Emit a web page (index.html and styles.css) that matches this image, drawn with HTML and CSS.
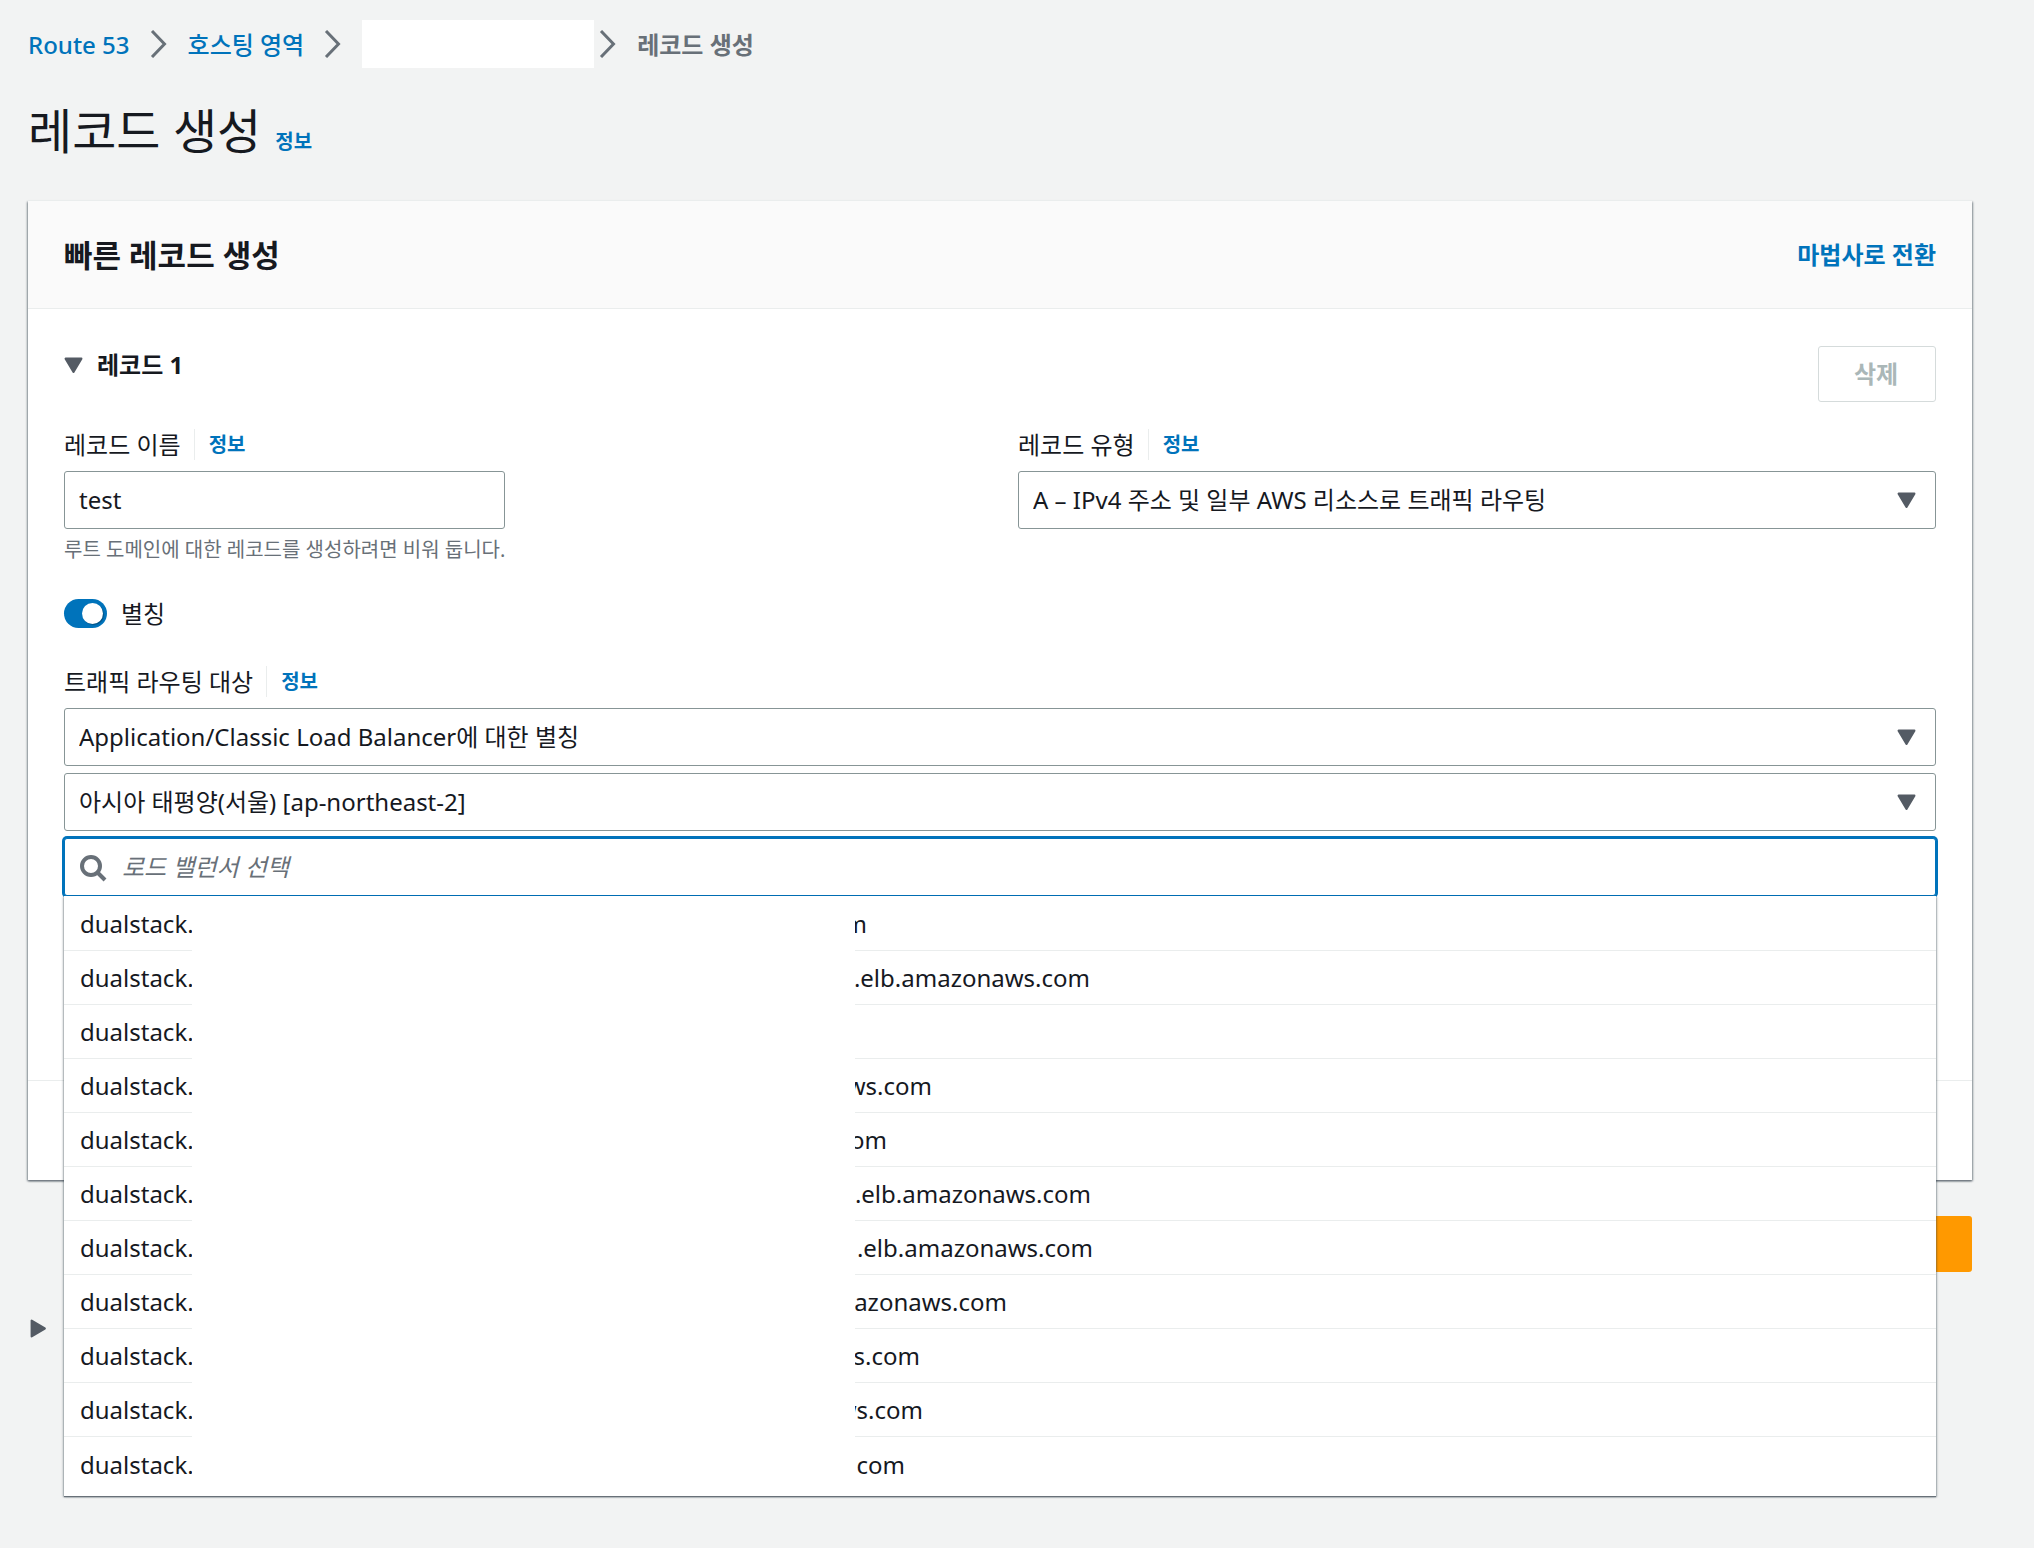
FILE: index.html
```html
<!DOCTYPE html>
<html lang="ko">

<head>
    <meta charset="utf-8">
    <title>레코드 생성</title>
    <link rel="stylesheet" href="styles.css">
</head>

<body>
    <div class="page">
        <nav class="breadcrumb">
            <a href="#">Route 53</a>
            <svg class="chevron" viewBox="0 0 18 28"><path d="M2 1 L14.500 14 L2 27"/></svg>
            <a href="#">호스팅 영역</a>
            <svg class="chevron" viewBox="0 0 18 28"><path d="M2 1 L14.500 14 L2 27"/></svg>
            <span class="zone"></span>
            <svg class="chevron last" viewBox="0 0 18 28"><path d="M2 1 L14.500 14 L2 27"/></svg>
            <span class="current">레코드 생성</span>
        </nav>

        <div class="title">
            <h1>레코드 생성</h1>
            <a class="info" href="#">정보</a>
        </div>

        <form class="card">
            <div class="cardHeader">
                <h2>빠른 레코드 생성</h2>
                <a href="#">마법사로 전환</a>
            </div>

            <div class="cardBody">
                <div class="recordHead">
                    <h3>
                        <svg class="arrow" viewBox="0 0 18 16"><path d="M1.500 1.500 H16.500 L9 14 Z"/></svg>
                        레코드 1
                    </h3>
                    <button class="remove" type="button" disabled>삭제</button>
                </div>

                <div class="columns">
                    <div>
                        <div class="labelRow">
                            <label for="name">레코드 이름</label>
                            <a class="info" href="#">정보</a>
                        </div>
                        <input class="control name" id="name" type="text" value="test">
                        <p class="hint">루트 도메인에 대한 레코드를 생성하려면 비워 둡니다.</p>
                    </div>
                    <div>
                        <div class="labelRow">
                            <label for="type">레코드 유형</label>
                            <a class="info" href="#">정보</a>
                        </div>
                        <div class="selectBox">
                            <select class="control" id="type">
                                <option>A – IPv4 주소 및 일부 AWS 리소스로 트래픽 라우팅</option>
                            </select>
                            <svg class="arrow" viewBox="0 0 18 16"><path d="M1.500 1.500 H16.500 L9 14 Z"/></svg>
                        </div>
                    </div>
                </div>

                <div class="alias">
                    <input class="toggle" id="alias" type="checkbox" checked>
                    <label for="alias">별칭</label>
                </div>

                <div class="labelRow">
                    <label for="target">트래픽 라우팅 대상</label>
                    <a class="info" href="#">정보</a>
                </div>
                <div class="targets">
                    <div class="selectBox">
                        <select class="control" id="target">
                            <option>Application/Classic Load Balancer에 대한 별칭</option>
                        </select>
                        <svg class="arrow" viewBox="0 0 18 16"><path d="M1.500 1.500 H16.500 L9 14 Z"/></svg>
                    </div>
                    <div class="selectBox">
                        <select class="control" aria-labelledby="target">
                            <option>아시아 태평양(서울) [ap-northeast-2]</option>
                        </select>
                        <svg class="arrow" viewBox="0 0 18 16"><path d="M1.500 1.500 H16.500 L9 14 Z"/></svg>
                    </div>
                    <div class="search">
                        <svg class="glass" viewBox="0 0 28 28"><circle cx="12" cy="12" r="9"/><path d="M18.500 18.500 L26 26"/></svg>
                        <input class="control" type="text" placeholder="로드 밸런서 선택" aria-label="로드 밸런서 선택">
                        <div class="dropdown">
                            <ul>
                                <li><span class="head">dualstack.</span><span class="tail" style="width: 12px">m</span></li>
                                <li><span class="head">dualstack.</span><span class="tail" style="width: 235px">.elb.amazonaws.com</span></li>
                                <li><span class="head">dualstack.</span></li>
                                <li><span class="head">dualstack.</span><span class="tail" style="width: 77px">ws.com</span></li>
                                <li><span class="head">dualstack.</span><span class="tail" style="width: 32px">om</span></li>
                                <li><span class="head">dualstack.</span><span class="tail" style="width: 236px">.elb.amazonaws.com</span></li>
                                <li><span class="head">dualstack.</span><span class="tail" style="width: 238px">.elb.amazonaws.com</span></li>
                                <li><span class="head">dualstack.</span><span class="tail" style="width: 152px">azonaws.com</span></li>
                                <li><span class="head">dualstack.</span><span class="tail" style="width: 65px">s.com</span></li>
                                <li><span class="head">dualstack.</span><span class="tail" style="width: 68px">ws.com</span></li>
                                <li><span class="head">dualstack.</span><span class="tail" style="width: 50px">com</span></li>
                            </ul>
                            <div class="cover"></div>
                        </div>
                    </div>
                </div>
            </div>

            <div class="cardFooter"></div>
        </form>

        <div class="actions">
            <button class="primary" type="submit" aria-label="레코드 생성"></button>
        </div>

        <div class="existing">
            <svg class="arrow right" viewBox="0 0 16 18"><path d="M1.500 1.500 V16.500 L14 9 Z"/></svg>
        </div>
    </div>
</body>

</html>
```

FILE: styles.css
```css
* {
    box-sizing: border-box;
}

body {
    margin: 0;
    background-color: #f2f3f3;
    color: #16191f;
    font-family: "Noto Sans", "Noto Sans CJK KR", sans-serif;
    font-size: 24px;
    line-height: 31px;
}

a {
    color: #0073bb;
    text-decoration: none;
}

h1, h2, h3, p, ul {
    margin: 0;
    padding: 0;
}

.page {
    min-height: 100vh;
    padding: 20px 62px 0 28px;
}

.breadcrumb {
    display: flex;
    align-items: center;
    height: 48px;
}

.breadcrumb a {
    font-weight: 500;
}

.chevron {
    width: 18px;
    height: 28px;
    margin: 0 20px;
    fill: none;
    stroke: #687078;
    stroke-width: 3;
}

.chevron.last {
    margin-left: 5px;
}

.zone {
    width: 232px;
    height: 48px;
    background-color: #fff;
}

.current {
    color: #687078;
    font-weight: 700;
}

.title {
    display: flex;
    align-items: baseline;
    gap: 14px;
    margin: 33px 0 40px;
}

h1 {
    font-size: 48px;
    font-weight: 400;
    line-height: 60px;
}

.info {
    font-size: 20px;
    font-weight: 700;
}

.card {
    background-color: #fff;
    box-shadow: 0 -1px 0 #eaeded, 0 1px 2px 0 #687078, 1px 1px 2px 0 rgba(0, 28, 36, .3), -1px 1px 2px 0 rgba(0, 28, 36, .3);
}

.cardHeader {
    display: flex;
    justify-content: space-between;
    align-items: center;
    height: 108px;
    padding: 0 36px;
    background-color: #fafafa;
    border-bottom: 1px solid #eaeded;
}

.cardHeader a {
    font-weight: 700;
}

h2 {
    font-size: 31px;
    line-height: 40px;
}

.cardBody {
    padding: 37px 36px 184px;
}

.recordHead {
    display: flex;
    justify-content: space-between;
    align-items: flex-start;
    margin-bottom: 27px;
}

h3 {
    display: flex;
    align-items: center;
    gap: 14px;
    font-size: 24px;
    line-height: 38px;
}

.arrow {
    width: 19px;
    height: 17px;
    fill: #545b64;
    stroke: #545b64;
    stroke-width: 2;
    stroke-linejoin: round;
}

.remove {
    width: 118px;
    height: 56px;
    padding: 0 2px 2px 0;
    background-color: #fff;
    border: 1px solid #d5dbdb;
    border-radius: 3px;
    color: #aab7b8;
    font: inherit;
    font-weight: 700;
}

.columns {
    display: grid;
    grid-template-columns: 1fr 1fr;
    gap: 36px;
}

.labelRow {
    display: flex;
    align-items: center;
    height: 31px;
    margin-bottom: 11px;
}

.labelRow .info {
    margin-left: 13px;
    padding-left: 14px;
    border-left: 1px solid #eaeded;
}

.control {
    display: block;
    width: 100%;
    height: 58px;
    padding: 0 14px 2px;
    background-color: #fff;
    border: 1px solid #879596;
    border-radius: 3px;
    color: #16191f;
    font: inherit;
    appearance: none;
}

.name {
    width: 48%;
}

.hint {
    margin-top: 6px;
    color: #687078;
    font-size: 20px;
    line-height: 30px;
}

.selectBox {
    position: relative;
}

.selectBox .arrow {
    position: absolute;
    top: 21px;
    right: 20px;
    pointer-events: none;
}

.alias {
    display: flex;
    align-items: center;
    gap: 14px;
    margin: 33px 0 37px;
}

.toggle {
    width: 43px;
    height: 29px;
    margin: 0;
    padding: 4px;
    background-color: #0073bb;
    border-radius: 15px;
    appearance: none;
}

.toggle::before {
    content: "";
    display: block;
    width: 21px;
    height: 21px;
    margin-left: auto;
    background-color: #fff;
    border-radius: 50%;
    box-shadow: 1px 1px 1px rgba(0, 0, 0, .3);
}

.targets {
    display: grid;
    gap: 7px;
}

.search {
    position: relative;
}

.search .control {
    padding-left: 57px;
    border-color: #0073bb;
    box-shadow: 0 0 0 2px #0073bb;
}

.search .control::placeholder {
    color: #687078;
    font-style: italic;
    opacity: 1;
}

.glass {
    position: absolute;
    top: 16px;
    left: 15px;
    width: 28px;
    height: 28px;
    fill: none;
    stroke: #687078;
    stroke-width: 4;
}

.dropdown {
    position: absolute;
    top: 100%;
    left: 0;
    right: 0;
    padding-bottom: 5px;
    background-color: #fff;
    box-shadow: 0 1px 1px 0 #687078, 1px 1px 2px 0 rgba(0, 28, 36, .3), -1px 1px 2px 0 rgba(0, 28, 36, .3);
}

.dropdown ul {
    list-style: none;
}

.dropdown li {
    display: flex;
    align-items: center;
    height: 54px;
    padding-left: 16px;
    border-bottom: 1px solid #eaeded;
    line-height: 53px;
}

.dropdown li:first-child {
    height: 55px;
}

.dropdown li:last-child {
    border-bottom: 0;
}

/* hides the private part of every host name */
.cover {
    position: absolute;
    top: 0;
    bottom: 0;
    left: 128px;
    width: 663px;
    background-color: #fff;
}

.head {
    width: 775px;
}

.tail {
    display: flex;
    justify-content: flex-end;
    overflow: hidden;
}

.cardFooter {
    height: 100px;
    border-top: 1px solid #eaeded;
}

.actions {
    display: flex;
    justify-content: flex-end;
    margin-top: 36px;
}

.primary {
    width: 150px;
    height: 56px;
    background-color: #f90;
    border: 0;
    border-radius: 3px;
}

.existing {
    margin-top: 41px;
    padding-left: 2px;
}

.arrow.right {
    width: 17px;
    height: 19px;
}
```
